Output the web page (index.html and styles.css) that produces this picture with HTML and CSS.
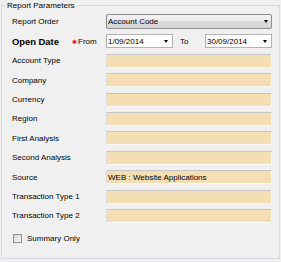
FILE: index.html
```html
<!DOCTYPE html>
<html>
<head>
<meta charset="utf-8">
<link rel="stylesheet" href="styles.css">
</head>
<body>
<fieldset class="group">
  <legend class="group-title">Report Parameters</legend>
  <div class="rows">
    <div class="row row-combo">
      <span class="label">Report Order</span>
      <div class="combo"><span class="ctl-text">Account Code</span><span class="arrow"></span></div>
    </div>
    <div class="row">
      <div class="label label-date">
        <span class="open-date">Open Date</span>
        <span class="req">✱</span>
        <span class="from">From</span>
      </div>
      <div class="date-area">
        <div class="date"><span class="ctl-text">1/09/2014</span><span class="arrow arrow-date"></span></div>
        <span class="to">To</span>
        <div class="date date-end"><span class="ctl-text">30/09/2014</span><span class="arrow arrow-date"></span></div>
      </div>
    </div>
    <div class="row"><span class="label">Account Type</span><div class="field"></div></div>
    <div class="row"><span class="label">Company</span><div class="field"></div></div>
    <div class="row"><span class="label">Currency</span><div class="field"></div></div>
    <div class="row"><span class="label">Region</span><div class="field"></div></div>
    <div class="row"><span class="label">First Analysis</span><div class="field"></div></div>
    <div class="row"><span class="label">Second Analysis</span><div class="field"></div></div>
    <div class="row"><span class="label">Source</span><div class="field"><span class="ctl-text">WEB : Website Applications</span></div></div>
    <div class="row"><span class="label">Transaction Type 1</span><div class="field"></div></div>
    <div class="row"><span class="label">Transaction Type 2</span><div class="field"></div></div>
    <div class="row row-check"><span class="check"></span><span>Summary Only</span></div>
  </div>
</fieldset>
</body>
</html>
```

FILE: styles.css
```css
html, body {
  margin: 0;
  padding: 0;
}
body {
  width: 281px;
  height: 262px;
  overflow: hidden;
  background: #f0f0f0;
  font-family: "Liberation Sans", Arial, sans-serif;
  font-size: 8px;
  color: #000;
}
.group {
  margin: 0 1px;
  padding: 3px 7px 13px 10px;
  border: 1px solid #d3dbe0;
  min-width: 0;
}
.group-title {
  margin-left: -7px;
  padding: 0 2px;
  font-size: 8px;
  line-height: 11px;
}
.rows {
  display: flex;
  flex-direction: column;
  gap: 5.4px;
}
.row {
  display: flex;
  align-items: center;
  height: 14px;
}
.row-combo {
  height: 15px;
}
.label {
  width: 94px;
  flex: none;
  white-space: nowrap;
}
.label-date {
  display: flex;
  align-items: center;
}
.open-date {
  width: 60px;
  font-weight: bold;
  font-size: 9.4px;
  color: #000;
}
.req {
  font-family: "DejaVu Sans", sans-serif;
  font-size: 6px;
  color: #e0141e;
  margin-right: 1px;
}
.ctl-text {
  white-space: nowrap;
}
.combo {
  flex: 1;
  height: 15px;
  box-sizing: border-box;
  border: 1px solid #8c8c8c;
  border-radius: 2px;
  background: linear-gradient(#f3f3f3, #e9e9e9 50%, #dcdcdc 50%, #d6d6d6);
  display: flex;
  align-items: center;
  padding-left: 1px;
}
.arrow {
  width: 0;
  height: 0;
  border-left: 2.5px solid transparent;
  border-right: 2.5px solid transparent;
  border-top: 3px solid #000;
  margin-left: auto;
  margin-right: 3px;
}
.arrow-date {
  margin-right: 4px;
}
.date-area {
  flex: 1;
  display: flex;
  align-items: center;
  height: 14px;
}
.date {
  width: 67px;
  height: 14px;
  box-sizing: border-box;
  border: 1px solid #b3b3b3;
  background: #fff;
  display: flex;
  align-items: center;
  padding-left: 1px;
}
.to {
  margin-left: 7px;
}
.date-end {
  margin-left: auto;
}
.field {
  flex: 1;
  height: 14px;
  box-sizing: border-box;
  background: #f5deb3;
  border-top: 1px solid #c6c6c6;
  border-left: 1px solid #dadada;
  border-right: 1px solid #fafafa;
  border-bottom: 1px solid #fafafa;
  padding-left: 1px;
  display: flex;
  align-items: center;
}
.row-check {
  margin-top: 3px;
}
.check {
  width: 9px;
  height: 9px;
  box-sizing: border-box;
  border: 1px solid #8f8f8f;
  background: linear-gradient(135deg, #d9d9d9, #f5f5f5);
  margin-left: 1px;
  margin-right: 5px;
}
```
